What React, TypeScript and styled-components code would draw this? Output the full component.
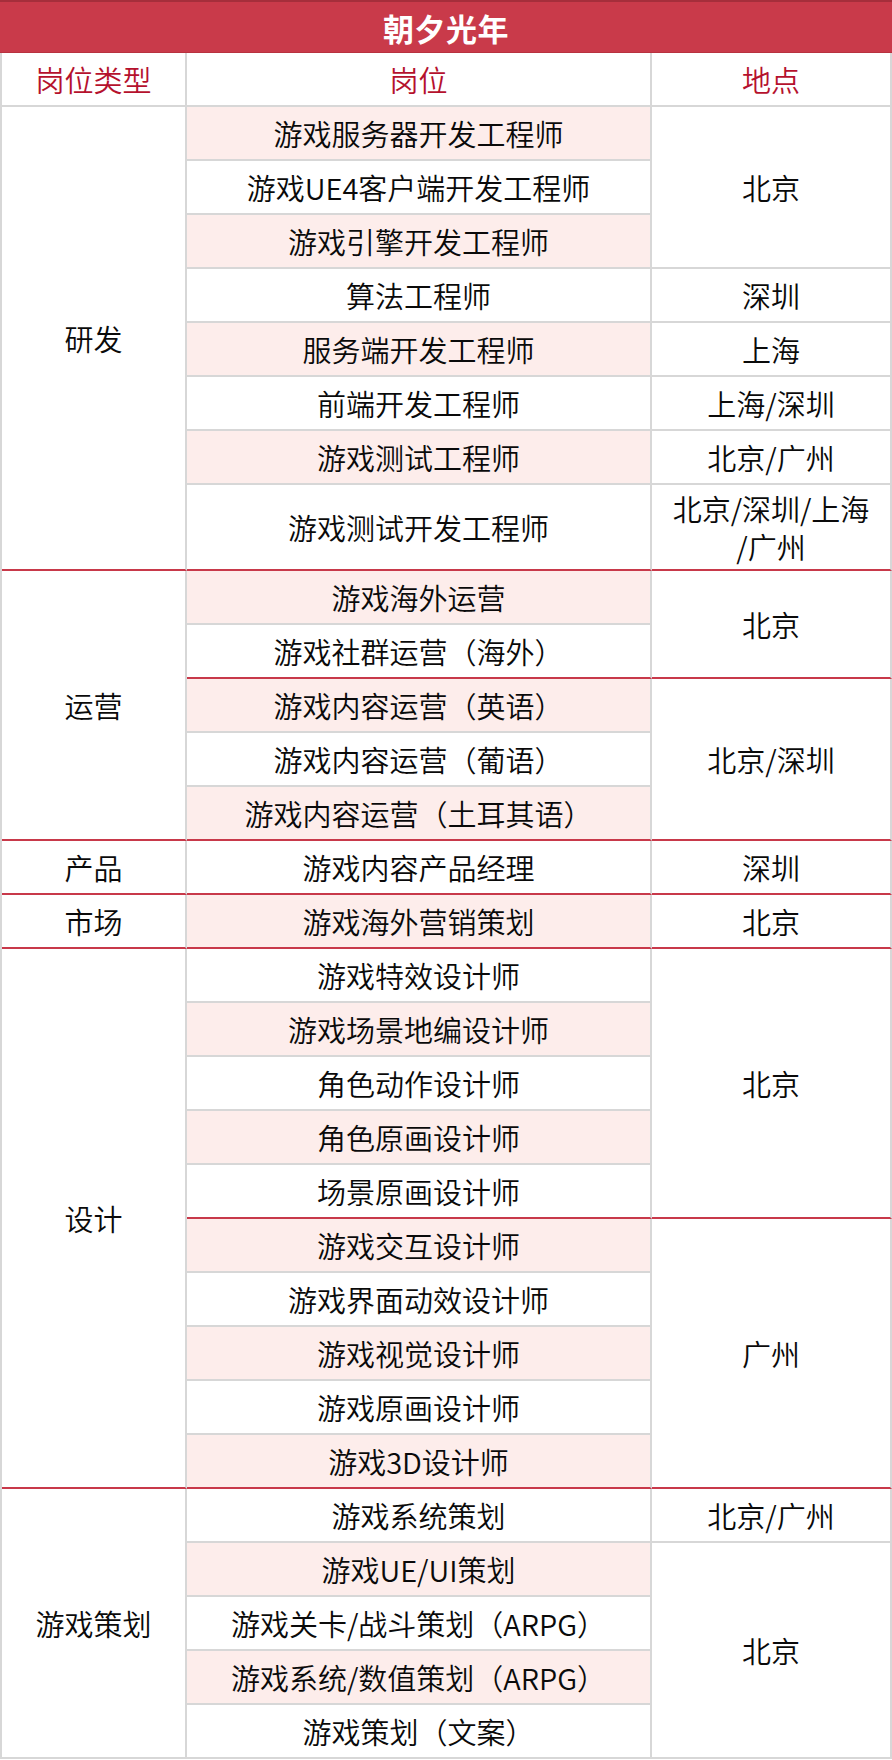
import React from "react";
import styled, { createGlobalStyle } from "styled-components";

const GlobalStyle = createGlobalStyle`
  html, body {
    margin: 0;
    padding: 0;
    background: #ffffff;
  }
  body {
    font-family: "Noto Sans CJK SC", "Noto Sans", sans-serif;
  }
  * { box-sizing: border-box; }
`;

const GRAY = "#d7d7d7";
const RED = "#c8394a";

type Block = { loc: React.ReactNode; rows: string[]; split?: boolean };
type Group = { type: string; blocks: Block[] };

const groups: Group[] = [
  {
    type: "研发",
    blocks: [
      { loc: "北京", rows: ["游戏服务器开发工程师", "游戏UE4客户端开发工程师", "游戏引擎开发工程师"] },
      { loc: "深圳", rows: ["算法工程师"] },
      { loc: "上海", rows: ["服务端开发工程师"] },
      { loc: "上海/深圳", rows: ["前端开发工程师"] },
      { loc: "北京/广州", rows: ["游戏测试工程师"] },
      {
        loc: (
          <>
            北京/深圳/上海
            <br />
            /广州
          </>
        ),
        rows: ["游戏测试开发工程师"],
      },
    ],
  },
  {
    type: "运营",
    blocks: [
      { loc: "北京", rows: ["游戏海外运营", "游戏社群运营（海外）"], split: true },
      { loc: "北京/深圳", rows: ["游戏内容运营（英语）", "游戏内容运营（葡语）", "游戏内容运营（土耳其语）"] },
    ],
  },
  { type: "产品", blocks: [{ loc: "深圳", rows: ["游戏内容产品经理"] }] },
  { type: "市场", blocks: [{ loc: "北京", rows: ["游戏海外营销策划"] }] },
  {
    type: "设计",
    blocks: [
      {
        loc: "北京",
        rows: ["游戏特效设计师", "游戏场景地编设计师", "角色动作设计师", "角色原画设计师", "场景原画设计师"],
        split: true,
      },
      {
        loc: "广州",
        rows: ["游戏交互设计师", "游戏界面动效设计师", "游戏视觉设计师", "游戏原画设计师", "游戏3D设计师"],
      },
    ],
  },
  {
    type: "游戏策划",
    blocks: [
      { loc: "北京/广州", rows: ["游戏系统策划"] },
      {
        loc: "北京",
        rows: ["游戏UE/UI策划", "游戏关卡/战斗策划（ARPG）", "游戏系统/数值策划（ARPG）", "游戏策划（文案）"],
      },
    ],
  },
];

const Page = styled.div`
  width: 892px;
`;

const TitleBar = styled.div`
  height: 53px;
  background: #c93a4a;
  border-top: 2px solid #a52e3b;
  border-bottom: 1px solid #b8323f;
  color: #ffffff;
  font-size: 31px;
  font-weight: 700;
  display: flex;
  align-items: center;
  justify-content: center;
  letter-spacing: 0.5px;
`;

const Table = styled.div`
  display: grid;
  grid-template-columns: 185px 465px 240px;
  border-left: 2px solid ${GRAY};
`;

const Cell = styled.div<{
  $col: number;
  $row: number;
  $span?: number;
  $pink?: boolean;
  $red?: boolean;
  $head?: boolean;
}>`
  grid-column: ${(p) => p.$col};
  grid-row: ${(p) => p.$row} / span ${(p) => p.$span ?? 1};
  min-height: 54px;
  padding: 4px 6px;
  display: flex;
  align-items: center;
  justify-content: center;
  text-align: center;
  font-size: 29px;
  font-weight: 350;
  line-height: 38px;
  color: ${(p) => (p.$head ? "#b5112d" : "#0a0a0a")};
  background: ${(p) => (p.$pink ? "#fdedeb" : "#ffffff")};
  border-right: 2px solid ${GRAY};
  border-bottom: 2px solid ${(p) => (p.$red ? RED : GRAY)};
`;

export default function App() {
  const cells: React.ReactNode[] = [];
  let row = 2;
  let idx = 0;
  groups.forEach((g, gi) => {
    const lastGroup = gi === groups.length - 1;
    const groupStart = row;
    let groupSpan = 0;
    g.blocks.forEach((b, bi) => {
      const lastBlock = bi === g.blocks.length - 1;
      const redEnd = (!lastGroup && lastBlock) || !!b.split;
      const blockStart = row;
      b.rows.forEach((name, ri) => {
        idx += 1;
        const isLast = ri === b.rows.length - 1;
        cells.push(
          <Cell key={`p-${idx}`} $col={2} $row={row} $pink={idx % 2 === 1} $red={isLast && redEnd}>
            {name}
          </Cell>
        );
        row += 1;
        groupSpan += 1;
      });
      cells.push(
        <Cell key={`l-${gi}-${bi}`} $col={3} $row={blockStart} $span={b.rows.length} $red={redEnd}>
          <span>{b.loc}</span>
        </Cell>
      );
    });
    cells.push(
      <Cell key={`t-${gi}`} $col={1} $row={groupStart} $span={groupSpan} $red={!lastGroup}>
        {g.type}
      </Cell>
    );
  });

  return (
    <Page>
      <GlobalStyle />
      <TitleBar>朝夕光年</TitleBar>
      <Table>
        <Cell $col={1} $row={1} $head>
          岗位类型
        </Cell>
        <Cell $col={2} $row={1} $head>
          岗位
        </Cell>
        <Cell $col={3} $row={1} $head>
          地点
        </Cell>
        {cells}
      </Table>
    </Page>
  );
}
